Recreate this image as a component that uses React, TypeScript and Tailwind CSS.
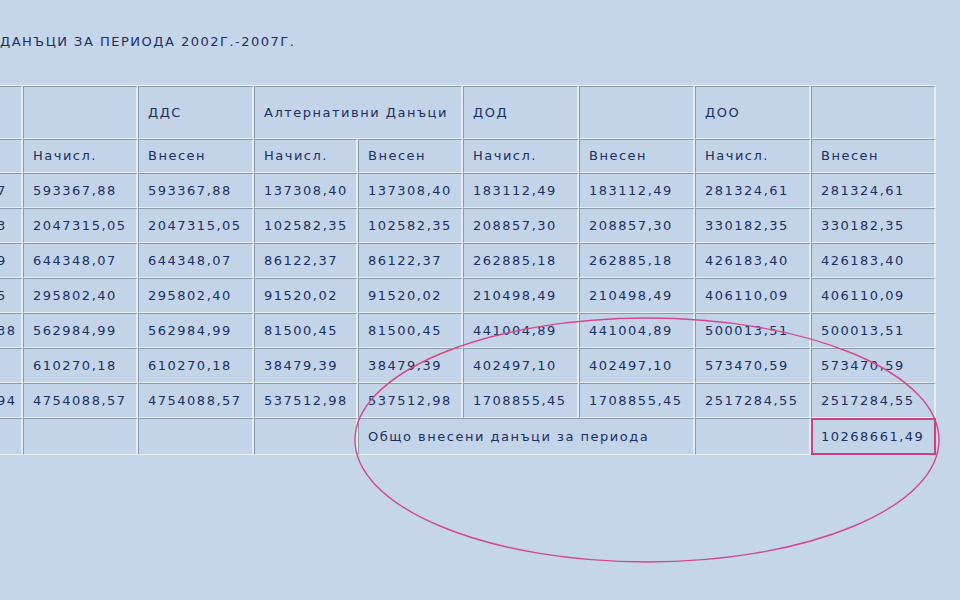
const rows = [
  ["125884,17", "593367,88", "593367,88", "137308,40", "137308,40", "183112,49", "183112,49", "281324,61", "281324,61"],
  ["341205,63", "2047315,05", "2047315,05", "102582,35", "102582,35", "208857,30", "208857,30", "330182,35", "330182,35"],
  ["197466,29", "644348,07", "644348,07", "86122,37", "86122,37", "262885,18", "262885,18", "426183,40", "426183,40"],
  ["165013,75", "295802,40", "295802,40", "91520,02", "91520,02", "210498,49", "210498,49", "406110,09", "406110,09"],
  ["1052337,38", "562984,99", "562984,99", "81500,45", "81500,45", "441004,89", "441004,89", "500013,51", "500013,51"],
  ["", "610270,18", "610270,18", "38479,39", "38479,39", "402497,10", "402497,10", "573470,59", "573470,59"],
  ["2103476,94", "4754088,57", "4754088,57", "537512,98", "537512,98", "1708855,45", "1708855,45", "2517284,55", "2517284,55"],
];

// classic border=1 table cell look: dark top/left, light bottom/right
const cell =
  "border-t border-l border-t-[#8c99aa] border-l-[#8c99aa] border-r-2 border-b border-r-[#e4ecf5] border-b-[#e4ecf5] bg-[#c3d4e9] pl-[9px] pr-1 text-left align-middle whitespace-nowrap";

export default function App() {
  return (
    <div
      className="relative w-[960px] h-[600px] overflow-hidden bg-[#c5d6eb] text-[#1a3060] text-[13px] tracking-[1.5px]"
      style={{ fontFamily: '"DejaVu Sans", Verdana, sans-serif' }}
    >
      <div className="pt-[34px] leading-[16px] h-[85px]">ДАНЪЦИ ЗА ПЕРИОДА 2002Г.-2007Г.</div>

      <table className="-ml-[88px] table-fixed border-separate border-spacing-0 border-t border-l border-t-[#eef3f9] border-l-[#eef3f9]">
        <colgroup>
          <col className="w-[110px]" />
          <col className="w-[115px]" />
          <col className="w-[116px]" />
          <col className="w-[104px]" />
          <col className="w-[105px]" />
          <col className="w-[116px]" />
          <col className="w-[116px]" />
          <col className="w-[116px]" />
          <col className="w-[125px]" />
        </colgroup>
        <tbody>
          <tr className="h-[53px]">
            <td className={cell}></td>
            <td className={cell}></td>
            <td className={cell}>ДДС</td>
            <td className={cell} colSpan={2}>Алтернативни Данъци</td>
            <td className={cell}>ДОД</td>
            <td className={cell}></td>
            <td className={cell}>ДОО</td>
            <td className={cell}></td>
          </tr>
          <tr className="h-[34px]">
            <td className={cell}></td>
            <td className={cell}>Начисл.</td>
            <td className={cell}>Внесен</td>
            <td className={cell}>Начисл.</td>
            <td className={cell}>Внесен</td>
            <td className={cell}>Начисл.</td>
            <td className={cell}>Внесен</td>
            <td className={cell}>Начисл.</td>
            <td className={cell}>Внесен</td>
          </tr>
          {rows.map((r, i) => (
            <tr key={i} className="h-[35px]">
              {r.map((v, j) => (
                <td key={j} className={cell}>{v}</td>
              ))}
            </tr>
          ))}
          <tr className="h-[37px]">
            <td className={cell}></td>
            <td className={cell}></td>
            <td className={cell}></td>
            <td className={cell}></td>
            <td className={cell} colSpan={3}>Общо внесени данъци за периода</td>
            <td className={cell}></td>
            <td className={cell}>10268661,49</td>
          </tr>
        </tbody>
      </table>

      {/* pink marker annotations drawn over the screenshot */}
      <svg className="pointer-events-none absolute inset-0" width="960" height="600" viewBox="0 0 960 600">
        <ellipse cx="647" cy="440" rx="292" ry="122" fill="none" stroke="#d2488c" strokeWidth="1.4" />
        <rect x="812" y="419" width="123" height="35" fill="none" stroke="#c94382" strokeWidth="2" />
      </svg>
    </div>
  );
}
